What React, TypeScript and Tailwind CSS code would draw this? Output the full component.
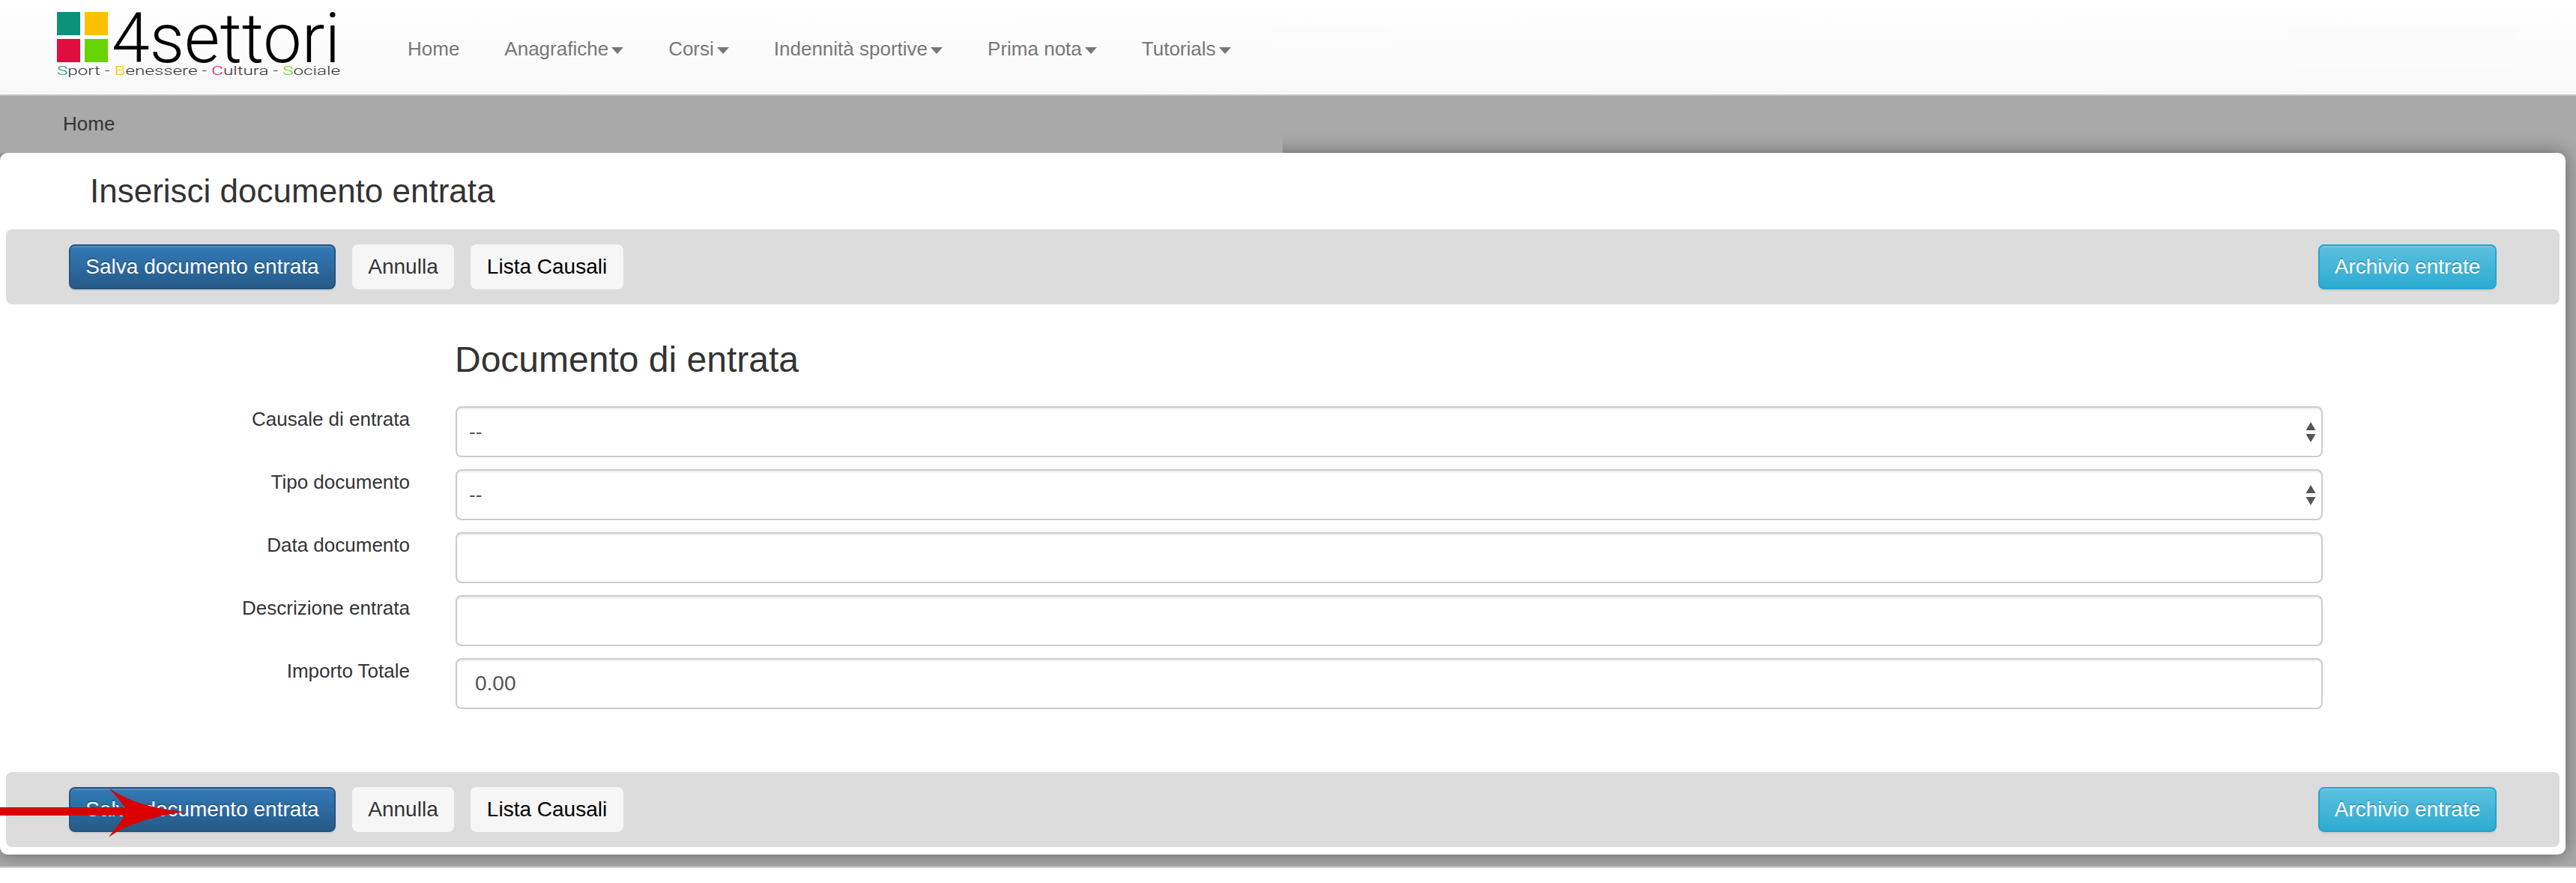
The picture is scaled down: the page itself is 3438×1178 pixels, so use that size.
import { ReactNode } from 'react';

const navItems = [
  { label: 'Home', caret: false },
  { label: 'Anagrafiche', caret: true },
  { label: 'Corsi', caret: true },
  { label: 'Indennità sportive', caret: true },
  { label: 'Prima nota', caret: true },
  { label: 'Tutorials', caret: true },
];

function Logo() {
  return (
    <svg width="400" height="110" viewBox="0 0 400 110" className="mb-[16px] shrink-0">
      <rect x="6" y="16" width="31" height="31" fill="#0b917c" />
      <rect x="43" y="16" width="31" height="31" fill="#ffc000" />
      <rect x="6" y="52" width="31" height="31" fill="#e00d3f" />
      <rect x="43" y="52" width="31" height="31" fill="#66d400" />
      <text x="79" y="83" fontFamily="Roboto, sans-serif" fontWeight="300" fontSize="92" textLength="305" lengthAdjust="spacingAndGlyphs" fill="#000">4settori</text>
      <text x="6" y="100" fontFamily="Roboto, sans-serif" fontWeight="300" fontSize="17" textLength="378" lengthAdjust="spacingAndGlyphs" fill="#333">
        <tspan fill="#0b917c">S</tspan>port - <tspan fill="#ffc000">B</tspan>enessere - <tspan fill="#e00d3f">C</tspan>ultura - <tspan fill="#66d400">S</tspan>ociale
      </text>
    </svg>
  );
}

function Navbar() {
  return (
    <nav className="flex h-[128px] shrink-0 items-center border-b-2 border-[#c4c4c4] bg-gradient-to-b from-white to-[#f8f8f8] pl-[70px]">
      <Logo />
      <ul className="ml-[74px] flex items-center gap-[60px] pt-[4px] text-[26px] text-[#777]">
        {navItems.map((item) => (
          <li key={item.label} className="flex items-center">
            {item.label}
            {item.caret && (
              <span className="ml-[4px] mt-[4px] h-0 w-0 border-x-[8px] border-t-[9px] border-x-transparent border-t-[#777]" />
            )}
          </li>
        ))}
      </ul>
      <div className="mb-[24px] ml-[53px] h-[25px] w-[165px] rounded-[6px] bg-[#fcfcfc]" />
      <div className="ml-[1193px] h-[50px] w-[306px] rounded-[8px] bg-[#fbfbfb]" />
    </nav>
  );
}

function Button({ className, children }: { className: string; children: ReactNode }) {
  return (
    <button type="button" className={`h-[60px] rounded-[8px] text-center text-[28px] ${className}`}>
      {children}
    </button>
  );
}

function Toolbar() {
  return (
    <div className="mx-[8px] flex h-[100px] items-center rounded-[8px] bg-[#dcdcdc] pl-[84px] pr-[84px]">
      <Button className="w-[356px] border-2 border-[#245580] bg-gradient-to-b from-[#337ab7] to-[#265a88] text-white shadow-[inset_0_2px_0_rgba(255,255,255,0.15),0_2px_2px_rgba(0,0,0,0.075)] [text-shadow:0_-2px_0_rgba(0,0,0,0.2)]">
        Salva documento entrata
      </Button>
      <Button className="ml-[22px] w-[136px] bg-[#f6f6f6] text-[#333]">Annulla</Button>
      <Button className="ml-[22px] w-[204px] bg-[#f6f6f6] text-black">Lista Causali</Button>
      <Button className="ml-auto w-[238px] border-2 border-[#28a4c9] bg-gradient-to-b from-[#5bc0de] to-[#2aabd2] text-white shadow-[inset_0_2px_0_rgba(255,255,255,0.15),0_2px_2px_rgba(0,0,0,0.075)] [text-shadow:0_-2px_0_rgba(0,0,0,0.2)]">
        Archivio entrate
      </Button>
    </div>
  );
}

const fieldClass =
  'h-[68px] w-full rounded-[8px] border-2 border-[#ccc] bg-white text-[#555] shadow-[inset_0_2px_2px_rgba(0,0,0,0.075)] outline-none';

function Field({ label, children }: { label: string; children: ReactNode }) {
  return (
    <div className="flex">
      <label className="w-[547px] shrink-0 text-right text-[26px] leading-[34px] text-[#333]">{label}</label>
      <div className="relative ml-[61px] w-[2492px]">{children}</div>
    </div>
  );
}

function SelectField({ label }: { label: string }) {
  return (
    <Field label={label}>
      <select className={`${fieldClass} appearance-none pl-[16px] text-[26px]`} defaultValue="--">
        <option>--</option>
      </select>
      <svg width="14" height="28" viewBox="0 0 14 28" className="absolute right-[9px] top-[21px]">
        <path d="M7 0L13.5 11H0.5Z M0.5 16H13.5L7 27Z" fill="#555" />
      </svg>
    </Field>
  );
}

function Arrow() {
  return (
    <svg width="260" height="80" viewBox="0 0 260 80" className="absolute left-0 top-[1047px] z-20">
      <path
        d="M0 30H166C160 20 152 12 145 4C170 22 205 32 247 36C205 42 170 52 145 70C152 60 160 52 166 41H0Z"
        fill="#d90000"
      />
    </svg>
  );
}

export default function App() {
  return (
    <div className="relative flex h-[1178px] w-[3438px] flex-col overflow-hidden bg-white font-['Liberation_Sans',Arial,sans-serif]">
      <Navbar />
      <main className="h-[1030px] shrink-0 overflow-hidden border-b-2 border-[#cfcfcf] bg-[#a9a9a9]">
        <div className="relative z-10 flex h-[76px] w-[1712px] items-center bg-[#a9a9a9] pb-[2px] pl-[84px] text-[26px] text-[#333]">
          Home
        </div>
        <section className="h-[936px] w-[3424px] rounded-[10px] bg-white shadow-[0_0_24px_rgba(0,0,0,0.42)]">
          <h1 className="flex h-[102px] items-center pl-[120px] text-[44px] font-normal text-[#333]">
            Inserisci documento entrata
          </h1>
          <Toolbar />
          <form className="flex flex-col gap-[16px] pb-[84px]">
            <h2 className="ml-[607px] flex h-[120px] items-center pt-[28px] text-[48px] font-normal text-[#333]">
              Documento di entrata
            </h2>
            <SelectField label="Causale di entrata" />
            <SelectField label="Tipo documento" />
            <Field label="Data documento">
              <input className={fieldClass} readOnly />
            </Field>
            <Field label="Descrizione entrata">
              <input className={fieldClass} readOnly />
            </Field>
            <Field label="Importo Totale">
              <input className={`${fieldClass} px-[24px] text-[28px]`} value="0.00" readOnly />
            </Field>
          </form>
          <Toolbar />
        </section>
      </main>
      <Arrow />
    </div>
  );
}
